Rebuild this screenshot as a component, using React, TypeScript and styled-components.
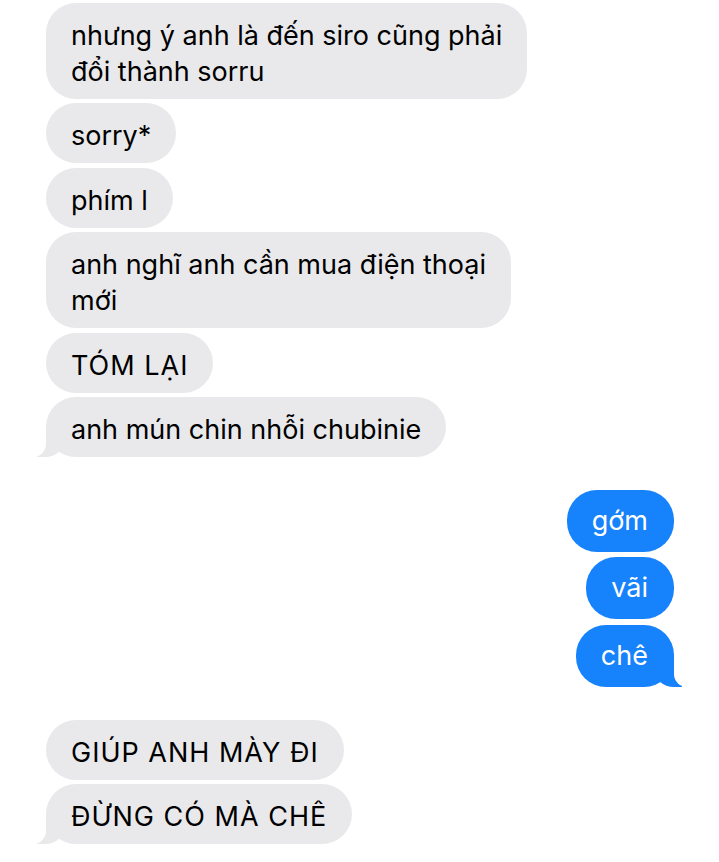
import styled, { createGlobalStyle, css } from "styled-components";

const GlobalStyle = createGlobalStyle`
  html, body {
    margin: 0;
    padding: 0;
    background: #ffffff;
  }
  body {
    font-family: Inter, "Noto Sans", "Liberation Sans", sans-serif;
    -webkit-font-smoothing: antialiased;
  }
`;

const GRAY = "#e9e9eb";
const BLUE = "#1682fb";

const Thread = styled.main`
  width: 719px;
  min-height: 862px;
  box-sizing: border-box;
  padding: 3px 45px 0 46px;
  display: flex;
  flex-direction: column;
  gap: 33px;
  overflow: hidden;
`;

const Group = styled.section<{ $mine?: boolean }>`
  display: flex;
  flex-direction: column;
  align-items: ${({ $mine }) => ($mine ? "flex-end" : "flex-start")};
  gap: ${({ $mine }) => ($mine ? "5.5px" : "4.4px")};
`;

const tailTheirs = css`
  &::before,
  &::after {
    content: "";
    position: absolute;
    bottom: 0;
    height: 30px;
  }
  &::before {
    left: -9px;
    width: 28px;
    background: ${GRAY};
    border-bottom-right-radius: 20px 18px;
    z-index: 0;
  }
  &::after {
    left: -34px;
    width: 34px;
    background: #ffffff;
    border-bottom-right-radius: 13px;
    z-index: 1;
  }
`;

const tailMine = css`
  &::before,
  &::after {
    content: "";
    position: absolute;
    bottom: 0;
    height: 30px;
  }
  &::before {
    right: -8px;
    width: 28px;
    background: ${BLUE};
    border-bottom-left-radius: 20px 18px;
    z-index: 0;
  }
  &::after {
    right: -34px;
    width: 34px;
    background: #ffffff;
    border-bottom-left-radius: 13px;
    z-index: 1;
  }
`;

const Bubble = styled.p<{ $mine?: boolean; $tail?: boolean; $caps?: boolean }>`
  position: relative;
  margin: 0;
  white-space: pre-line;
  padding: ${({ $mine }) => ($mine ? "13px 26px 13px 25px" : "15px 25px 9px")};
  border-radius: 30px;
  font-size: 27px;
  line-height: 36px;
  letter-spacing: ${({ $caps }) => ($caps ? "1px" : "0")};
  color: ${({ $mine }) => ($mine ? "#ffffff" : "#000000")};
  background: ${({ $mine }) => ($mine ? BLUE : GRAY)};
  ${({ $tail, $mine }) => ($tail ? ($mine ? tailMine : tailTheirs) : "")}
`;

type Msg = { text: string };

const theirsFirst: Msg[] = [
  { text: "nhưng ý anh là đến siro cũng phải\nđổi thành sorru" },
  { text: "sorry*" },
  { text: "phím l" },
  { text: "anh nghĩ anh cần mua điện thoại\nmới" },
  { text: "TÓM LẠI" },
  { text: "anh mún chin nhỗi chubinie" },
];

const mine: Msg[] = [{ text: "gớm" }, { text: "vãi" }, { text: "chê" }];

const theirsLast: Msg[] = [{ text: "GIÚP ANH MÀY ĐI" }, { text: "ĐỪNG CÓ MÀ CHÊ" }];

const isCaps = (s: string) => s === s.toUpperCase() && s !== s.toLowerCase();

const MessageGroup = ({ items, isMine }: { items: Msg[]; isMine?: boolean }) => (
  <Group $mine={isMine}>
    {items.map((m, i) => (
      <Bubble
        key={m.text}
        $mine={isMine}
        $caps={isCaps(m.text)}
        $tail={i === items.length - 1}
      >
        {m.text}
      </Bubble>
    ))}
  </Group>
);

export default function App() {
  return (
    <>
      <GlobalStyle />
      <Thread>
        <MessageGroup items={theirsFirst} />
        <MessageGroup items={mine} isMine />
        <MessageGroup items={theirsLast} />
      </Thread>
    </>
  );
}
